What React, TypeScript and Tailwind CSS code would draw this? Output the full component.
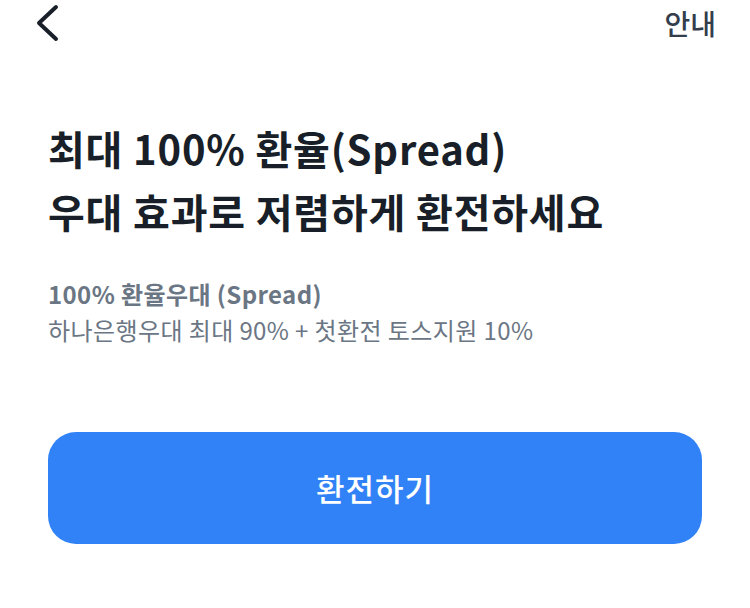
import React from 'react';

export default function App() {
  return (
    <div
      className="flex h-[608px] w-[750px] flex-col bg-white"
      style={{ fontFamily: '"Noto Sans CJK KR", "Noto Sans", sans-serif' }}
    >
      <header className="flex h-[46px] items-center justify-between pl-[34px] pr-[34px]">
        <button type="button" className="flex items-center">
          <svg width="26" height="38" viewBox="0 0 26 38" fill="none">
            <path
              d="M22 3L5 19L22 35"
              stroke="#191f28"
              strokeWidth="4"
              strokeLinecap="round"
              strokeLinejoin="round"
            />
          </svg>
        </button>
        <span className="text-[28px] font-medium leading-none text-[#333d4b]">안내</span>
      </header>

      <main className="flex flex-col px-[48px]">
        <h1 className="mt-[71px] text-[40px] font-bold leading-[63px] tracking-[0.8px] text-[#191f28]">
          최대 100% 환율(Spread)
          <br />
          우대 효과로 저렴하게 환전하세요
        </h1>

        <div className="mt-[36px] flex flex-col gap-[6px]">
          <p className="text-[24px] font-bold leading-[30px] tracking-[0.4px] text-[#6b7684]">
            100% 환율우대 (Spread)
          </p>
          <p className="text-[24px] font-normal leading-[30px] tracking-[0.4px] text-[#6b7684]">
            하나은행우대 최대 90% + 첫환전 토스지원 10%
          </p>
        </div>

        <button
          type="button"
          className="mt-[87px] flex h-[112px] w-full items-center justify-center rounded-[28px] bg-[#3182f6] text-[31px] font-medium tracking-[1px] text-white"
        >
          환전하기
        </button>
      </main>
    </div>
  );
}
